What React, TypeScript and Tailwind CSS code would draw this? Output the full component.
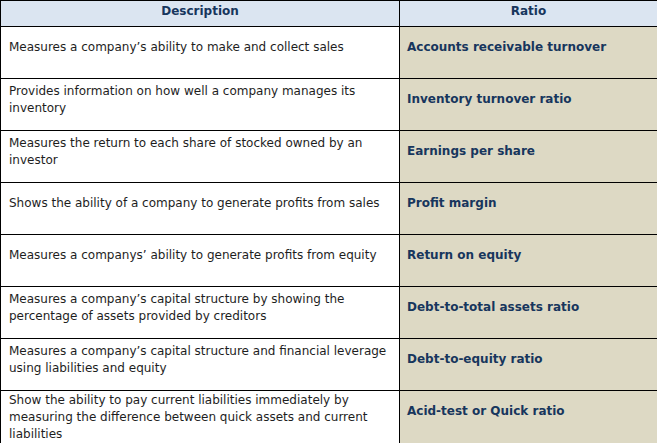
import React from 'react';

const rows: { desc: string; ratio: string }[] = [
  { desc: 'Measures a company’s ability to make and collect sales', ratio: 'Accounts receivable turnover' },
  { desc: 'Provides information on how well a company manages its inventory', ratio: 'Inventory turnover ratio' },
  { desc: 'Measures the return to each share of stocked owned by an investor', ratio: 'Earnings per share' },
  { desc: 'Shows the ability of a company to generate profits from sales', ratio: 'Profit margin' },
  { desc: 'Measures a companys’ ability to generate profits from equity', ratio: 'Return on equity' },
  { desc: 'Measures a company’s capital structure by showing the percentage of assets provided by creditors', ratio: 'Debt-to-total assets ratio' },
  { desc: 'Measures a company’s capital structure and financial leverage using liabilities and equity', ratio: 'Debt-to-equity ratio' },
  { desc: 'Show the ability to pay current liabilities immediately by measuring the difference between quick assets and current liabilities', ratio: 'Acid-test or Quick ratio' },
];

export default function App() {
  return (
    <div className="w-[657px] h-[443px] overflow-hidden bg-white font-['DejaVu_Sans',sans-serif] text-[12px]">
      <div className="w-[680px] border-t border-l border-black">
        {/* Header */}
        <div className="grid grid-cols-[399px_1fr] h-[26px] bg-[#dbe5f1] border-b border-black text-[#17365d] font-bold">
          <div className="flex items-center justify-center border-r border-black pb-[6px]">Description</div>
          <div className="flex items-center justify-center pb-[6px] pr-[23px]">Ratio</div>
        </div>

        {rows.map((r, i) => (
          <div
            key={r.ratio}
            className={`grid grid-cols-[399px_1fr] border-b border-black ${i === rows.length - 1 ? 'h-[64px]' : 'h-[52px]'}`}
          >
            <div className="border-r border-black pl-[8px] pr-[12px] flex items-center pb-[10px] text-[#1e1e1e] leading-[17px]">
              <span>{r.desc}</span>
            </div>
            <div className="bg-[#ddd9c4] px-[7px] pt-[12px] leading-[17px] text-[#17365d] font-bold">
              {r.ratio}
            </div>
          </div>
        ))}
      </div>
    </div>
  );
}
